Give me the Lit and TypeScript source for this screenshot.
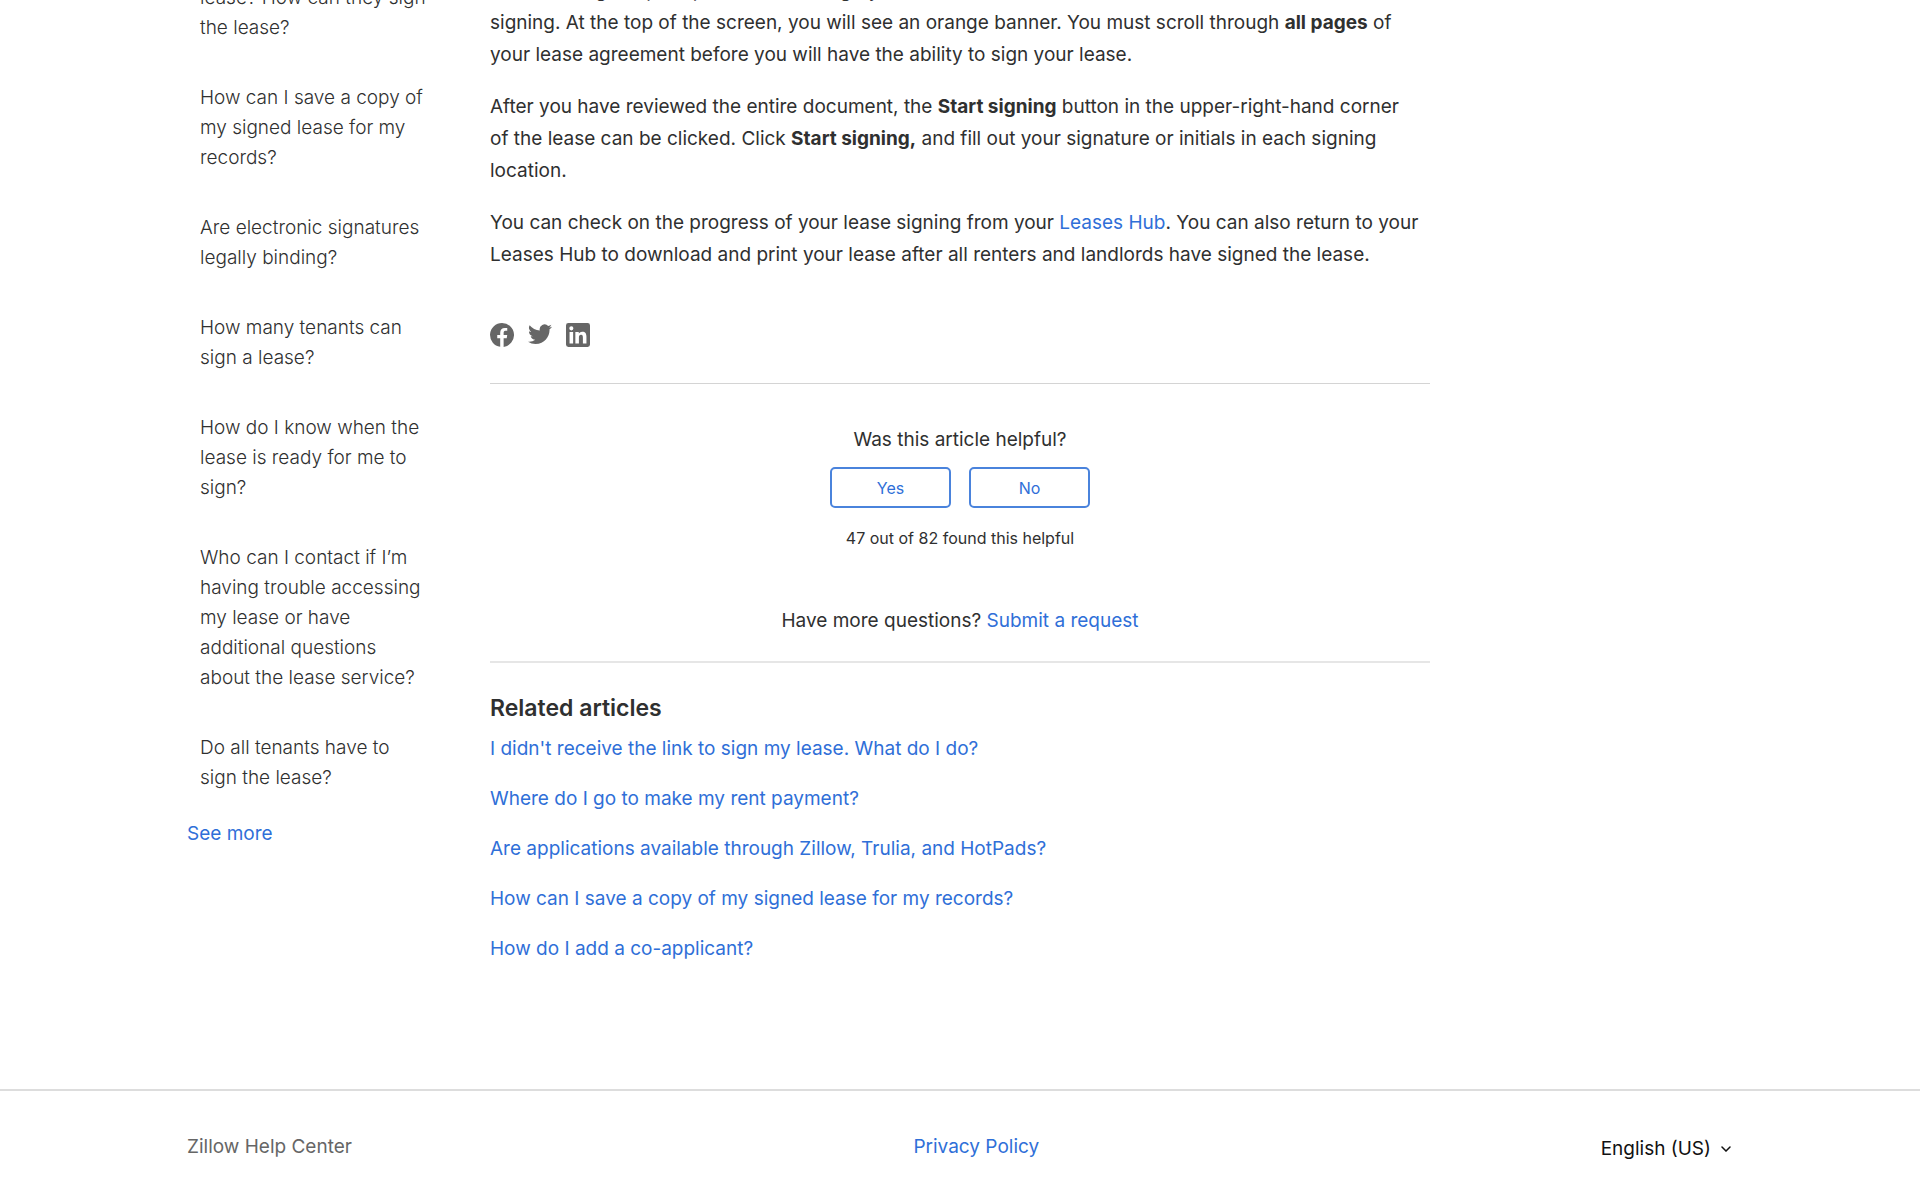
import { LitElement, html, css, svg } from "lit";
import { customElement } from "lit/decorators.js";

const SIDE_ARTICLES = [
  "lease? How can they sign the lease?",
  "How can I save a copy of my signed lease for my records?",
  "Are electronic signatures legally binding?",
  "How many tenants can sign a lease?",
  "How do I know when the lease is ready for me to sign?",
  "Who can I contact if I’m having trouble accessing my lease or have additional questions about the lease service?",
  "Do all tenants have to sign the lease?",
];

const RELATED = [
  "I didn't receive the link to sign my lease. What do I do?",
  "Where do I go to make my rent payment?",
  "Are applications available through Zillow, Trulia, and HotPads?",
  "How can I save a copy of my signed lease for my records?",
  "How do I add a co-applicant?",
];

const SHARE = [
  {
    label: "Facebook",
    shape: svg`<path d="M6 0a6 6 0 01.813 11.945V7.63h1.552l.244-1.585H6.812v-.867c0-.658.214-1.242.827-1.242h.985V2.55c-.173-.024-.538-.075-1.23-.075-1.444 0-2.29.767-2.29 2.513v1.055H3.618v1.585h1.484v4.304A6.001 6.001 0 016 0z"/>`,
  },
  {
    label: "Twitter",
    shape: svg`<path d="M10.769 3.123v.317c0 3.257-2.48 7.01-7.01 7.01A6.93 6.93 0 010 9.343a4.93 4.93 0 003.639-1.02A2.468 2.468 0 011.338 6.61c.38.055.742.04 1.109-.045A2.463 2.463 0 01.473 4.148v-.03c.33.184.709.298 1.11.314A2.463 2.463 0 01.82 1.139a6.999 6.999 0 005.078 2.578A2.466 2.466 0 0110.1 1.469 4.878 4.878 0 0011.665.872a2.464 2.464 0 01-1.084 1.359A4.908 4.908 0 0012 1.845a5.277 5.277 0 01-1.231 1.278z"/>`,
  },
  {
    label: "LinkedIn",
    shape: svg`<path d="M10.8 0A1.2 1.2 0 0112 1.2v9.6a1.2 1.2 0 01-1.2 1.2H1.2A1.2 1.2 0 010 10.8V1.2A1.2 1.2 0 011.2 0h9.6zM8.09 4.356a1.87 1.87 0 00-1.598.792l-.085.133h-.024v-.783H4.676v5.727h1.778V7.392c0-.747.142-1.47 1.068-1.47.913 0 .925.854.925 1.518v2.785h1.778V7.084l-.005-.325c-.05-1.38-.456-2.403-2.13-2.403zm-4.531.142h-1.78v5.727h1.78V4.498zm-.89-2.846a1.032 1.032 0 100 2.064 1.032 1.032 0 000-2.064z"/>`,
  },
];

@customElement("app-root")
export class AppRoot extends LitElement {
  static styles = css`
    :host {
      display: block;
      height: 100vh;
      overflow: hidden;
      background: #fff;
      color: #2f3030;
      font-family: Inter, "Liberation Sans", sans-serif;
      font-size: 19px;
      line-height: 32px;
    }
    a { color: #2f6fd8; text-decoration: none; }
    a:hover { text-decoration: underline; }
    p, ul, h2 { margin: 0; padding: 0; }
    ul { list-style: none; }
    .columns {
      display: grid;
      grid-template-columns: 1fr minmax(0, 940px) 1fr;
      max-width: 1546px;
      margin: 0 auto;
      padding: 0 24px;
    }
    .side {
      margin-top: -17px;
      padding-right: 64px;
      line-height: 30px;
    }
    .side-list {
      display: flex;
      flex-direction: column;
      gap: 40px;
      padding-left: 13px;
      margin-bottom: 26px;
    }
    .side-link { display: block; color: #2f3030; font-weight: 300; }
    .article { margin-top: -25px; }
    .body { display: flex; flex-direction: column; gap: 20px; }
    .share { display: flex; gap: 14px; margin-top: 52px; }
    .share-link { display: block; width: 24px; height: 24px; color: #666; }
    .share-icon { display: block; width: 24px; height: 24px; fill: currentColor; }
    .votes {
      display: flex;
      flex-direction: column;
      align-items: center;
      margin-top: 36px;
      padding: 40px 0 24px;
      border-top: 1px solid #d4d4d4;
      border-bottom: 2px solid #e6e6e6;
    }
    .vote-buttons { display: flex; gap: 18px; margin: 11px 0 18px; }
    .vote {
      width: 121px;
      height: 41px;
      border: 2px solid #4a83dc;
      border-radius: 5px;
      background: #fff;
      color: #2f6fd8;
      font: inherit;
      font-size: 16px;
      line-height: 24px;
    }
    .count { font-size: 16px; line-height: 24px; }
    .more { margin-top: 55px; }
    .related { padding-top: 27px; }
    .related-title { font-size: 23px; line-height: 36px; font-weight: 600; }
    .related-list { display: flex; flex-direction: column; gap: 18px; margin-top: 7px; }
    .footer { margin-top: 124px; border-top: 2px solid #ddd; }
    .footer-inner {
      display: flex;
      justify-content: space-between;
      align-items: flex-start;
      max-width: 1546px;
      margin: 0 auto;
      padding: 40px 24px;
    }
    .home { color: #666; }
    .language {
      display: flex;
      align-items: center;
      gap: 10px;
      padding: 2px 2px 0 0;
      border: 0;
      background: none;
      color: #111;
      font: inherit;
    }
    .chevron { width: 10px; height: 6px; fill: none; stroke: currentColor; }
  `;

  render() {
    return html`
      <main class="columns">
        <nav class="side" aria-label="Articles in this section">
          <ul class="side-list">
            ${SIDE_ARTICLES.map((t) => html`<li><a class="side-link" href="#">${t}</a></li>`)}
          </ul>
          <a href="#">See more</a>
        </nav>
        <article class="article">
          <div class="body">
            <p>
              After reading the prompt for the full lengthy lease document continue to the<br />
              signing. At the top of the screen, you will see an orange banner. You must scroll through
              <b>all pages</b> of your lease agreement before you will have the ability to sign your lease.
            </p>
            <p>
              After you have reviewed the entire document, the <b>Start signing</b> button in the
              upper-right-hand corner<br />
              of the lease can be clicked. Click <b>Start signing,</b> and fill out your signature or
              initials in each signing location.
            </p>
            <p>
              You can check on the progress of your lease signing from your
              <a href="#">Leases Hub</a>. You can also return to your Leases Hub to download and print
              your lease after all renters and landlords have signed the lease.
            </p>
          </div>
          <div class="share">
            ${SHARE.map(
              (s) => html`<a class="share-link" href="#" aria-label=${s.label}>
                <svg class="share-icon" viewBox="0 0 12 12" aria-hidden="true">${s.shape}</svg>
              </a>`
            )}
          </div>
          <section class="votes">
            <p>Was this article helpful?</p>
            <div class="vote-buttons">
              <button class="vote" type="button">Yes</button>
              <button class="vote" type="button">No</button>
            </div>
            <p class="count">47 out of 82 found this helpful</p>
            <p class="more">Have more questions? <a href="#">Submit a request</a></p>
          </section>
          <section class="related">
            <h2 class="related-title">Related articles</h2>
            <ul class="related-list">
              ${RELATED.map((t) => html`<li><a href="#">${t}</a></li>`)}
            </ul>
          </section>
        </article>
      </main>
      <footer class="footer">
        <div class="footer-inner">
          <a class="home" href="#">Zillow Help Center</a>
          <a href="#">Privacy Policy</a>
          <button class="language" type="button">
            English (US)
            <svg class="chevron" viewBox="0 0 10 6" aria-hidden="true">
              <path d="M1 1l4 4 4-4" stroke-width="1.5" stroke-linecap="round" />
            </svg>
          </button>
        </div>
      </footer>
    `;
  }
}
